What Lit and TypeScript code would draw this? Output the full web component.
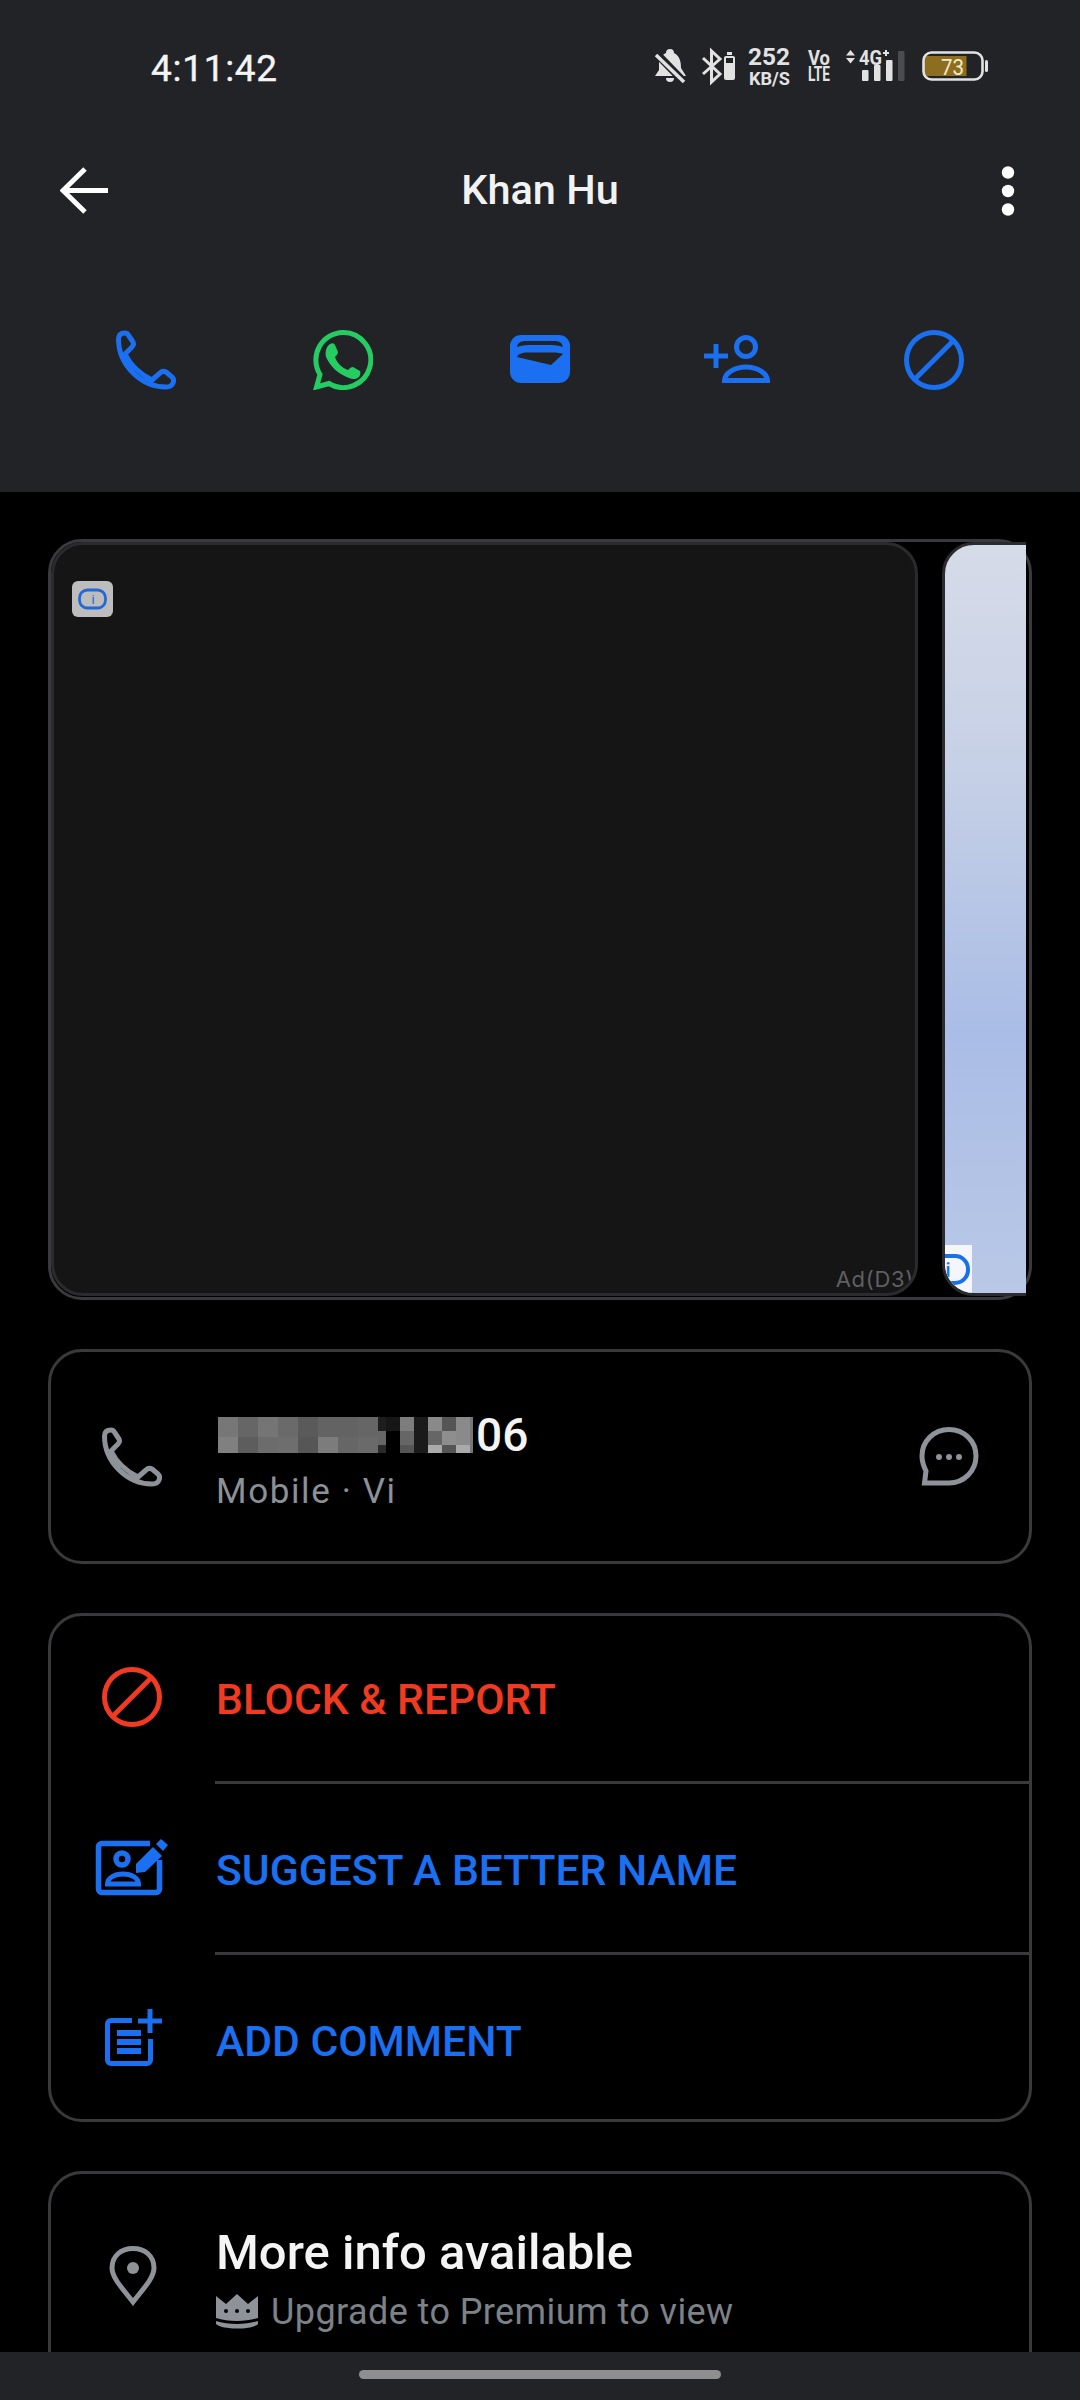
import { LitElement, html, css } from "lit";
import { customElement } from "lit/decorators.js";

const leftCells = [
  "#777","#666","#757575","#6a6a6a","#5a5a5a","#636363","#636363","#666",
  "#808080","#5d5d5d","#6c6c6c","#6e6e6e","#565656","#7c7c7c","#666","#6a6a6a",
];
const rightCells = [
  "#1e1e1e","#161616","#7d7d7d","#1a1a1a","#8a8a8a","#555","#8a8a8a","#777",
  "#666","#000","#666","#1a1a1a","#666","#8e8e8e","#8a8a8a","#777",
  "#2a2a2a","#000","#555","#1a1a1a","#aaa","#555","#aaa","#777",
];

const phonePath = "M2.500 9C2.500 5 5 3 9 3C11 3 12 4 13 6L17 12C18 14 17 16 16 17L9 24C14 34 24 44 36 50L44 43C46 41 48 41 50 42L56 47C58 49 58 51 57 53C56 56 53 57 50 57C25 57 2.500 35 2.500 9Z";

@customElement("app-root")
export class AppRoot extends LitElement {
  static styles = css`
    :host {
      display: flex;
      flex-direction: column;
      width: 1080px;
      height: 2400px;
      overflow: hidden;
      background: #000;
      font-family: Roboto, "Noto Sans", sans-serif;
      color: #f2f2f2;
    }
    svg { display: block; flex-shrink: 0; }
    .header { background: #212327; height: 492px; flex-shrink: 0; }
    .status { height: 136px; display: flex; align-items: center; justify-content: space-between; padding-left: 151px; padding-right: 90px; }
    .time { font-size: 37px; font-weight: 400; letter-spacing: 0.7px; color: #f4f4f4; -webkit-text-stroke: 0.4px #f4f4f4; }
    .appbar { height: 108px; display: grid; grid-template-columns: 1fr auto 1fr; align-items: center; padding: 0 60px; }
    .back { margin-top: 2px; }
    .dots { justify-self: end; margin-right: 5px; margin-top: 2px; }
    .title { font-size: 41.5px; font-weight: 500; color: #f2f2f2; margin-top: -2px; }
    .actions { display: grid; grid-template-columns: repeat(5, 1fr); padding: 86px 48px 0; justify-items: center; }
    .wallet { margin-top: 5px; }
    .main { flex: 1; min-height: 0; overflow: hidden; padding: 47px 48px 0; display: flex; flex-direction: column; gap: 49px; }
    .card { border: 3px solid #3a3a3c; border-radius: 34px; flex-shrink: 0; }
    .ad { height: 761px; box-sizing: border-box; }
    .scroller { display: flex; gap: 24px; height: 755px; width: 975px; overflow: hidden; }
    .panel { box-sizing: border-box; height: 754px; flex-shrink: 0; border: 3px solid #2b2b2d; border-radius: 32px; position: relative; overflow: hidden; }
    .panel-a { width: 867px; background: #151515; }
    .panel-b { width: 300px; background: linear-gradient(180deg, #d6dbe8 0%, #c6d0e6 30%, #aabde6 65%, #b9c8e6 100%); }
    .badge-a { position: absolute; left: 18px; top: 36px; width: 41px; height: 36px; background: #bdbdbd; border-radius: 6px; display: flex; align-items: center; justify-content: center; }
    .badge-b { position: absolute; left: 0; bottom: 0; width: 27px; height: 48px; background: #f4f6fc; }
    .adlabel { position: absolute; right: 1px; bottom: 1px; font-family: Inter, Roboto, sans-serif; font-size: 22px; letter-spacing: 0.7px; color: #5f5f61; }
    .number { height: 215px; box-sizing: border-box; display: flex; align-items: center; padding-right: 50px; }
    .slot { width: 164px; flex-shrink: 0; display: flex; justify-content: center; align-items: center; }
    .slot-tel { padding-right: 2px; box-sizing: border-box; }
    .numtext { flex: 1; padding-top: 13px; }
    .numline { display: flex; align-items: center; height: 57px; padding-left: 3px; font-size: 46px; font-weight: 500; color: #f4f4f4; }
    .mosaic-a { display: grid; grid-template-columns: repeat(8, 20px); grid-template-rows: 20px 16px; }
    .mosaic-b { display: grid; grid-template-columns: 8px repeat(6, 14px) 3px; grid-template-rows: 14px 14px 8px; margin-right: 3px; }
    .sub { height: 57px; line-height: 57px; padding-left: 1px; font-size: 35px; letter-spacing: 1.6px; color: #8c9097; }
    .list { height: 509px; box-sizing: border-box; }
    .row { height: 168px; box-sizing: border-box; padding-top: 61px; display: flex; align-items: flex-start; }
    .row.first { margin-top: -3px; }
    .row.last { height: 164px; }
    .row .slot { height: 50px; }
    .rowtext { font-size: 42.6px; font-weight: 500; line-height: 50px; padding-left: 1px; }
    .red { color: #f03a22; }
    .blue { color: #1a70f0; }
    .divider { height: 3px; background: #3a3a3c; margin-left: 164px; margin-right: -3px; }
    .more { height: 300px; box-sizing: border-box; display: flex; align-items: flex-start; padding-top: 49px; }
    .more .slot { padding-top: 23px; }
    .more-title { font-size: 49px; font-weight: 500; line-height: 60px; padding-left: 1px; color: #f4f4f4; }
    .more-sub { display: flex; align-items: center; gap: 13px; height: 40px; margin-top: 9px; padding-left: 1px; font-size: 36px; letter-spacing: 0.42px; color: #7d8188; }
    .nav { height: 48px; flex-shrink: 0; background: #212327; display: flex; justify-content: center; padding-top: 18px; box-sizing: border-box; }
    .pill { width: 362px; height: 9px; border-radius: 5px; background: #8e8e90; }
  `;

  private statusIcons() {
    const c = "#e2e2e2";
    return html`<svg width="340" height="50" viewBox="650 45 340 50" fill="${c}" font-family="Roboto, sans-serif">
      <path d="M666 55a4 4 0 0 1 8 0C680 58 681 64 681 70L686 78H655L659 72V65C659 60 662 57 666 55Z"/>
      <path d="M666 80h8a4 4 0 0 1-8 0Z"/>
      <path d="M654 53L686 86" stroke="#212327" stroke-width="8" fill="none"/>
      <path d="M656 57L684 84" stroke="${c}" stroke-width="3.5" fill="none"/>
      <path d="M703 60L720 76L711.5 84V53L720 61L703 76" fill="none" stroke="${c}" stroke-width="3"/>
      <rect x="724" y="58" width="11" height="24" rx="2"/>
      <rect x="727" y="54" width="5" height="3"/>
      <rect x="726" y="60" width="7" height="5" fill="#212327"/>
      <text x="748" y="67" font-size="23" font-weight="700" textLength="42" lengthAdjust="spacingAndGlyphs">252</text>
      <text x="749" y="86.5" font-size="19" font-weight="700" textLength="41" lengthAdjust="spacingAndGlyphs">KB/S</text>
      <text x="808" y="67" font-size="20" font-weight="700" textLength="22" lengthAdjust="spacingAndGlyphs">Vo</text>
      <text x="808" y="83" font-size="20" font-weight="700" textLength="22" lengthAdjust="spacingAndGlyphs">LTE</text>
      <path d="M846 57.5L850.5 52L855 57.5ZM846 60L850.5 65.500L855 60Z"/>
      <text x="859" y="67" font-size="20" font-weight="700" textLength="23" lengthAdjust="spacingAndGlyphs">4G</text>
      <path d="M883 55h6M886 52v6" fill="none" stroke="${c}" stroke-width="2"/>
      <rect x="862" y="72" width="6.500" height="11" rx="1"/>
      <rect x="874" y="67" width="6.500" height="16" rx="1"/>
      <rect x="886" y="62" width="6.500" height="21" rx="1"/>
      <rect x="898" y="53" width="6.500" height="30" rx="1" fill="#4a4c50"/>
      <path d="M926 58h39v20h-39a4 4 0 0 1-4-4V62a4 4 0 0 1 4-4Z" fill="#8d6e1f" transform="translate(1.500 0)"/>
      <rect x="923.500" y="54.500" width="59" height="27" rx="8" fill="none" stroke="${c}" stroke-width="2.600"/>
      <rect x="985" y="62" width="3" height="12" rx="1.500"/>
      <text x="941" y="77" font-size="22" fill="#f3eacb" textLength="23" lengthAdjust="spacingAndGlyphs">73</text>
    </svg>`;
  }

  private block(color: string) {
    return html`<svg width="60" height="60" viewBox="0 0 60 60" fill="none" stroke="${color}" stroke-width="5">
      <circle cx="30" cy="30" r="27.500"/>
      <path d="M11 49L49 11"/>
    </svg>`;
  }

  private cells(list: string[]) {
    return list.map((c) => html`<div style="background:${c}"></div>`);
  }

  render() {
    const blue = "#1a70f0";
    const grey = "#8e9299";
    return html`
      <div class="header">
        <div class="status">
          <span class="time">4:11:42</span>
          ${this.statusIcons()}
        </div>
        <div class="appbar">
          <svg class="back" width="48" height="48" viewBox="0 0 48 48" fill="none" stroke="#fff" stroke-width="5">
            <path d="M25 2L3 23.500L25 45M3 23.500H48"/>
          </svg>
          <span class="title">Khan Hu</span>
          <svg class="dots" width="14" height="50" viewBox="0 0 14 50" fill="#fff">
            <circle cx="7" cy="6.500" r="6.200"/><circle cx="7" cy="25" r="6.200"/><circle cx="7" cy="43.500" r="6.200"/>
          </svg>
        </div>
        <div class="actions">
          <svg width="60" height="60" viewBox="0 0 60 60" fill="none" stroke="${blue}" stroke-width="5" stroke-linejoin="round"><path d="${phonePath}"/></svg>
          <svg width="60" height="60" viewBox="0 0 60 60">
            <path d="M30 2.500A27.500 27.500 0 1 1 16 53.500L3.500 57L7 44.500A27.500 27.500 0 0 1 30 2.500Z" fill="none" stroke="#25cc62" stroke-width="5"/>
            <path d="M17 14C19 13 21 13 22 15L25 22C25 24 23 26 22 27C24 33 29 38 35 40C37 38 38 37 40 37L47 41C48 42 47 46 46 47C44 49 40 50 36 48C25 44 17 36 13 27C12 22 13 17 17 14Z" fill="#25cc62"/>
          </svg>
          <svg class="wallet" width="60" height="60" viewBox="0 0 60 60">
            <rect x="0" y="0" width="60" height="48" rx="11" fill="${blue}"/>
            <path d="M7 12C8 8 10 6 16 6H44C50 6 52 8 53 12C50 11 46 10 42 10H18C14 10 10 11 7 12Z" fill="#212327"/>
            <path d="M7 22C8 19 12 17.500 18 17.500H42C47 17.500 51 18 53 19L41 30Z" fill="#212327"/>
          </svg>
          <svg width="80" height="60" viewBox="0 0 80 60" fill="none" stroke="${blue}" stroke-width="5">
            <circle cx="49" cy="17" r="9.500"/>
            <path d="M7 26H31M19 14V38" />
            <path d="M27.500 50.500h43c0-7-10-13.500-21.500-13.500s-21.500 6.500-21.500 13.500Z"/>
          </svg>
          ${this.block(blue)}
        </div>
      </div>

      <div class="main">
        <div class="card ad">
          <div class="scroller">
            <div class="panel panel-a">
              <div class="badge-a">
                <svg width="30" height="22" viewBox="0 0 30 22" font-family="Roboto, sans-serif">
                  <rect x="1.500" y="2" width="26" height="18" rx="8" fill="none" stroke="#2268d8" stroke-width="2.800"/>
                  <text x="15" y="16" font-size="13" fill="#2268d8" text-anchor="middle">i</text>
                </svg>
              </div>
              <span class="adlabel">Ad(D3)</span>
            </div>
            <div class="panel panel-b">
              <div class="badge-b">
                <svg width="27" height="48" viewBox="0 0 27 48" font-family="Roboto, sans-serif">
                  <rect x="-14" y="11" width="37" height="27" rx="13" fill="none" stroke="#1a70e8" stroke-width="4"/>
                  <text x="3" y="32" font-size="20" font-weight="500" fill="#1a70e8" text-anchor="middle">i</text>
                </svg>
              </div>
            </div>
          </div>
        </div>

        <div class="card number">
          <div class="slot slot-tel">
            <svg width="60" height="60" viewBox="0 0 60 60" fill="none" stroke="${grey}" stroke-width="5" stroke-linejoin="round"><path d="${phonePath}"/></svg>
          </div>
          <div class="numtext">
            <div class="numline">
              <div class="mosaic-a">${this.cells(leftCells)}</div>
              <div class="mosaic-b">${this.cells(rightCells)}</div>
              <span>06</span>
            </div>
            <div class="sub">Mobile · Vi</div>
          </div>
          <svg width="60" height="60" viewBox="0 0 60 60" fill="none" stroke="${grey}" stroke-width="5">
            <path d="M30 2.500C45 2.500 57 14 57 29C57 44 45 56 30 56H5.500L7 44C4.500 39 3 34 3 29C3 14 15 2.500 30 2.500Z"/>
            <g fill="${grey}" stroke="none"><circle cx="20" cy="30" r="3"/><circle cx="30" cy="30" r="3"/><circle cx="40" cy="30" r="3"/></g>
          </svg>
        </div>

        <div class="card list">
          <div class="row first">
            <div class="slot">
              <svg width="80" height="80" viewBox="0 0 80 80" fill="none" stroke="#f03a22" stroke-width="5">
                <circle cx="39" cy="38" r="27.500"/><path d="M20 57L58 19"/>
              </svg>
            </div>
            <span class="rowtext red">BLOCK &amp; REPORT</span>
          </div>
          <div class="divider"></div>
          <div class="row">
            <div class="slot">
              <svg width="80" height="80" viewBox="0 0 80 80" fill="none" stroke="${blue}" stroke-width="5.500">
                <path d="M57 13.500H9a3.500 3.500 0 0 0-3.500 3.500V59a3.500 3.500 0 0 0 3.500 3.500H63a3.500 3.500 0 0 0 3.500-3.500V30"/>
                <circle cx="29" cy="29" r="6"/>
                <path d="M14.500 54h31c0-6-7-10-15.500-10s-15.500 4-15.500 10Z" stroke-width="5"/>
                <g fill="${blue}" stroke="none">
                  <path d="M43 34L60 17L69 26L52 42L43 43Z"/>
                  <path d="M63 14L68 9L75 15L70 21Z"/>
                </g>
              </svg>
            </div>
            <span class="rowtext blue">SUGGEST A BETTER NAME</span>
          </div>
          <div class="divider"></div>
          <div class="row last">
            <div class="slot">
              <svg width="80" height="80" viewBox="0 0 80 80" fill="none" stroke="${blue}" stroke-width="5">
                <path d="M39 19.500H18a3.500 3.500 0 0 0-3.500 3.500V59a3.500 3.500 0 0 0 3.500 3.500H54a3.500 3.500 0 0 0 3.500-3.500V38"/>
                <path d="M45 20H69M57 8V32"/>
                <g fill="${blue}" stroke="none">
                  <rect x="24" y="29" width="24" height="6"/>
                  <rect x="24" y="38" width="24" height="6"/>
                  <rect x="24" y="47" width="24" height="6"/>
                </g>
              </svg>
            </div>
            <span class="rowtext blue">ADD COMMENT</span>
          </div>
        </div>

        <div class="card more">
          <div class="slot">
            <svg width="48" height="60" viewBox="0 0 48 60" fill="none" stroke="${grey}" stroke-width="5">
              <path d="M24 56C14 43 3 32 3 22C3 10 12 2.500 24 2.500C36 2.500 45 10 45 22C45 32 34 43 24 56Z"/>
              <circle cx="24" cy="22" r="6" fill="${grey}" stroke="none"/>
            </svg>
          </div>
          <div>
            <div class="more-title">More info available</div>
            <div class="more-sub">
              <svg width="42" height="36" viewBox="0 0 42 36" fill="${grey}">
                <path d="M0 2L10 10L21 0L32 10L42 2V24C30 28 12 28 0 24Z"/>
                <path d="M0 27C12 31 30 31 42 27V30C36 36 6 36 0 30Z"/>
                <g fill="#000"><circle cx="10" cy="17" r="2"/><circle cx="21" cy="17" r="2"/><circle cx="32" cy="17" r="2"/></g>
              </svg>
              <span>Upgrade to Premium to view</span>
            </div>
          </div>
        </div>
      </div>

      <div class="nav"><div class="pill"></div></div>
    `;
  }
}
